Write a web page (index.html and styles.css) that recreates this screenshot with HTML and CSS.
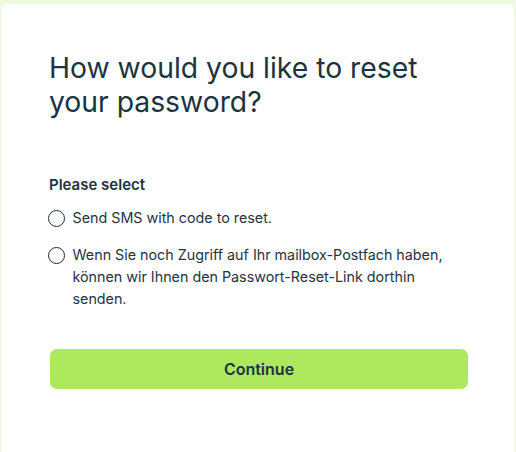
FILE: index.html
```html
<!DOCTYPE html>
<html lang="en">
<head>
<meta charset="utf-8">
<link rel="stylesheet" href="styles.css">
</head>
<body>
<main class="card">
  <h1 class="title">How would you like to reset your password?</h1>
  <form class="form">
    <fieldset class="group">
      <legend class="legend">Please select</legend>
      <label class="option">
        <input type="radio" name="method" class="radio">
        <span class="option-text">Send SMS with code to reset.</span>
      </label>
      <label class="option">
        <input type="radio" name="method" class="radio">
        <span class="option-text">Wenn Sie noch Zugriff auf Ihr mailbox-Postfach haben, können wir Ihnen den Passwort-Reset-Link dorthin senden.</span>
      </label>
    </fieldset>
    <button type="button" class="btn">Continue</button>
  </form>
</main>
</body>
</html>
```
FILE: styles.css
```css
* { box-sizing: border-box; }
html, body { height: 100%; }
body {
  margin: 0;
  background: #effadf;
  font-family: Inter, "Noto Sans", sans-serif;
  color: #1c3340;
  overflow: hidden;
}
.card {
  margin: 4px 2px 0 1px;
  min-height: 470px;
  background: #ffffff;
  border-radius: 6px;
  padding: 47px 49px 40px 48px;
}
.title {
  margin: 0;
  font-size: 28.3px;
  line-height: 34px;
  font-weight: 400;
  color: #1b3441;
  max-width: 400px;
}
.form {
  margin-top: 56px;
  display: flex;
  flex-direction: column;
}
.group {
  border: 0;
  margin: 0;
  padding: 0;
  display: flex;
  flex-direction: column;
  gap: 15px;
}
.legend {
  padding: 0;
  font-size: 15px;
  line-height: 20px;
  font-weight: 600;
  margin-bottom: 12px;
}
.option {
  display: flex;
  align-items: flex-start;
  gap: 8px;
  font-size: 14.3px;
  line-height: 22px;
  color: #1f3441;
}
.radio {
  appearance: none;
  -webkit-appearance: none;
  width: 17px;
  height: 17px;
  margin: 3px 0 0 -1.5px;
  border: 1.3px solid #1c2b33;
  border-radius: 50%;
  background: #fff;
  flex: none;
}
.option-text { flex: 1; }
.btn {
  margin-top: 39px;
  height: 40px;
  width: 418px;
  margin-left: 1px;
  border: 0;
  border-radius: 7px;
  background: #aee85c;
  color: #1c3340;
  font-family: Inter, "Noto Sans", sans-serif;
  font-size: 16px;
  font-weight: 600;
}
```
